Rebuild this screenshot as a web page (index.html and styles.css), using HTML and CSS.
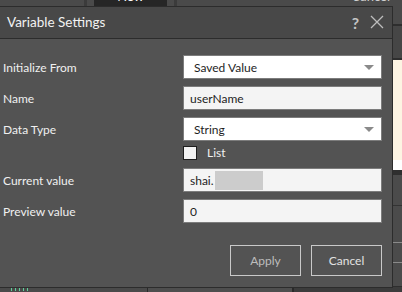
FILE: index.html
```html
<!DOCTYPE html>
<html lang="en">
<head>
  <meta charset="UTF-8">
  <title>Variable Settings</title>
  <link rel="stylesheet" href="styles.css">
</head>
<body>
  <div class="app">
    <div class="app-top">
      <div class="top-cell"></div>
      <div class="top-sep"></div>
      <div class="top-cell small"></div>
      <div class="top-tab"><span>New</span></div>
      <div class="top-cell small"></div>
      <div class="top-sep"></div>
      <div class="top-cell grow"><span class="top-text">Cancel</span></div>
    </div>
    <div class="app-side">
      <div class="side-a"></div>
      <div class="side-b"></div>
      <div class="side-cream"></div>
      <div class="side-white"></div>
      <div class="side-c"></div>
      <div class="side-d"></div>
      <div class="side-e"></div>
      <div class="side-f"></div>
    </div>
    <div class="app-bottom">
      <div class="bottom-left">
        <svg class="ticks" width="20" height="4" viewBox="0 0 20 4">
          <path d="M0 0.5 H18 M0.5 0 V4 M4.5 0 V4 M8.5 0 V4 M12.5 0 V4 M16.5 0 V4" stroke="#5fcf9a" stroke-width="1" fill="none"/>
        </svg>
      </div>
      <div class="bottom-mid"></div>
      <div class="bottom-right"></div>
    </div>

    <div class="dialog">
      <div class="dialog-header">
        <div class="dialog-title">Variable Settings</div>
        <div class="dialog-help">?</div>
        <svg class="dialog-close" width="14" height="14" viewBox="0 0 14 14">
          <path d="M1 1 L13 13 M13 1 L1 13" stroke="#bdbdbd" stroke-width="1.3" fill="none"/>
        </svg>
      </div>
      <div class="dialog-body">
        <div class="form-row">
          <div class="form-label">Initialize From</div>
          <div class="field select">
            <span>Saved Value</span>
            <span class="caret"></span>
          </div>
        </div>
        <div class="form-row">
          <div class="form-label">Name</div>
          <div class="field input">userName</div>
        </div>
        <div class="form-row">
          <div class="form-label">Data Type</div>
          <div class="field select">
            <span>String</span>
            <span class="caret"></span>
          </div>
        </div>
        <div class="check-row">
          <span class="checkbox"></span>
          <span class="check-label">List</span>
        </div>
        <div class="form-row">
          <div class="form-label">Current value</div>
          <div class="field input">shai.<span class="blur"></span></div>
        </div>
        <div class="form-row">
          <div class="form-label">Preview value</div>
          <div class="field input">0</div>
        </div>
        <div class="dialog-actions">
          <button class="btn btn-apply">Apply</button>
          <button class="btn">Cancel</button>
        </div>
      </div>
    </div>
  </div>
</body>
</html>
```

FILE: styles.css
```css
body {
  margin: 0;
  padding: 0;
  background-color: #474747;
  font-family: "Lato", "Open Sans", sans-serif;
  overflow: hidden;
}
.app {
  position: relative;
  width: 402px;
  height: 292px;
  background-color: #4a4a4a;
}
.app-top {
  display: flex;
  height: 6px;
  background-color: #4a4a4a;
  overflow: hidden;
}
.top-cell {
  width: 84px;
  background-color: #4a4a4a;
}
.top-cell.small {
  width: 7px;
}
.top-cell.grow {
  flex: 1;
  position: relative;
}
.top-sep {
  width: 3px;
  background-color: #3b3b3b;
}
.top-tab {
  width: 73px;
  background-color: #262626;
  color: #fff;
  font-size: 13px;
  line-height: 13px;
  text-align: center;
}
.top-tab span {
  display: inline-block;
  transform: translateY(-10px);
}
.top-text {
  color: #d0d0d0;
  font-size: 13px;
  line-height: 13px;
  display: block;
  text-align: right;
  padding-right: 12px;
  transform: translateY(-10px);
}
.app-side {
  position: absolute;
  right: 0;
  top: 6px;
  width: 9px;
  height: 286px;
  display: flex;
  flex-direction: column;
}
.side-a {
  height: 18px;
  background-color: #4a4a4a;
  border-bottom: 2px solid #2e2e2e;
}
.side-b {
  height: 32px;
  background-color: #464646;
  border-bottom: 2px solid #2e2e2e;
}
.side-cream {
  height: 100px;
  background-color: #fdf4e3;
}
.side-white {
  height: 10px;
  background-color: #ffffff;
}
.side-c {
  height: 5px;
  background-color: #2f2f2f;
}
.side-d {
  height: 30px;
  background-color: #4b4b4b;
  border-bottom: 1px solid #333;
}
.side-e {
  height: 36px;
  background-color: #4b4b4b;
  border-bottom: 1px solid #8a8a8a;
}
.side-f {
  flex: 1;
  background-color: #4b4b4b;
  border-top: 19px solid #4b4b4b;
  box-shadow: inset 0 20px 0 -19px #8a8a8a;
}
.app-bottom {
  position: absolute;
  left: 0;
  bottom: 0;
  width: 402px;
  height: 5px;
  display: flex;
  border-top: 1px solid #2e2e2e;
}
.bottom-left {
  width: 147px;
  background-color: #4a4a4a;
  border-right: 1px solid #2a2a2a;
  overflow: hidden;
}
.ticks {
  display: block;
  margin: 0 0 0 11px;
}
.bottom-mid {
  width: 144px;
  background-color: #4e4e4e;
  border-right: 2px solid #2a2a2a;
}
.bottom-right {
  flex: 1;
  background-color: #3c3c3c;
}

/* dialog */
.dialog {
  position: absolute;
  left: 0;
  top: 6px;
  width: 392px;
  height: 280px;
  background-color: #535353;
  border: 1px solid #2c2c2c;
  border-left: none;
  display: flex;
  flex-direction: column;
}
.dialog-header {
  height: 31px;
  background-color: #484848;
  border-bottom: 1px solid #2c2c2c;
  display: flex;
  align-items: center;
  padding: 0 8px 0 7px;
}
.dialog-title {
  flex: 1;
  color: #f2f2f2;
  font-size: 13.5px;
  padding-bottom: 2px;
}
.dialog-help {
  color: #c4c4c4;
  font-size: 16px;
  font-weight: bold;
  margin-right: 11px;
  padding-bottom: 1px;
}
.dialog-close {
  display: block;
  margin-bottom: 1px;
}
.dialog-body {
  flex: 1;
  padding: 15px 10px 0 3px;
}
.form-row {
  display: flex;
  align-items: center;
  height: 26px;
  margin-bottom: 5px;
}
.form-label {
  width: 180px;
  color: #f0f0f0;
  font-size: 12px;
}
.field {
  flex: 1;
  height: 24px;
  box-sizing: border-box;
  border: 1px solid #7c7c7c;
  display: flex;
  align-items: center;
  font-size: 12px;
  color: #1e1e1e;
  padding-left: 6px;
}
.field.select {
  background-color: #ffffff;
  padding-left: 10px;
  padding-right: 7px;
  justify-content: space-between;
}
.field.input {
  background-color: #f4f4f4;
}
.caret {
  width: 0;
  height: 0;
  border-left: 5px solid transparent;
  border-right: 5px solid transparent;
  border-top: 5px solid #8a8a8a;
}
.blur {
  display: inline-block;
  width: 48px;
  height: 19px;
  margin-left: 1px;
  background-color: #cccccc;
}
.check-row {
  display: flex;
  align-items: center;
  height: 15px;
  margin: -2px 0 7px 180px;
}
.checkbox {
  width: 12px;
  height: 12px;
  border: 1px solid #1e1e1e;
  background-color: #f2f2f2;
}
.check-label {
  color: #f0f0f0;
  font-size: 12px;
  margin-left: 10px;
}
.dialog-actions {
  display: flex;
  justify-content: flex-end;
  gap: 10px;
  margin-top: 21px;
}
.btn {
  width: 71px;
  height: 31px;
  background: transparent;
  border: 1px solid #c9c9c9;
  color: #e2e2e2;
  font-family: "Lato", "Open Sans", sans-serif;
  font-size: 12px;
  padding: 0;
}
.btn-apply {
  color: #bdbdbd;
}
```
